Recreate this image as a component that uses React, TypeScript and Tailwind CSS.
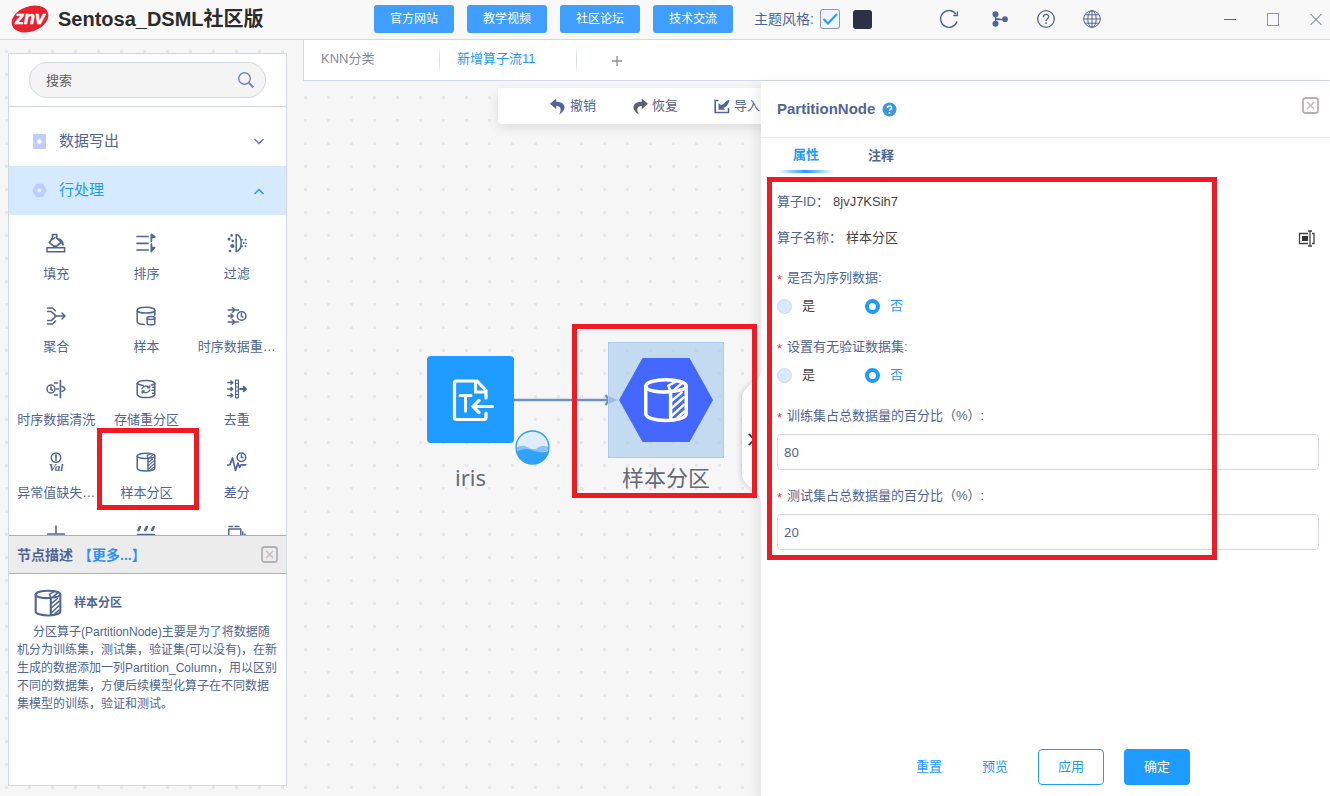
import { useState } from "react";
import type { ReactNode } from "react";
import clsx from "clsx";

const FONT = "font-['Liberation_Sans','Noto_Sans_CJK_SC',sans-serif]";

interface IconProps {
  className?: string;
}

function Icon({ className, children }: IconProps & { children: ReactNode }) {
  return (
    <svg
      viewBox="0 0 20 20"
      fill="none"
      stroke="currentColor"
      strokeWidth={1.5}
      strokeLinecap="round"
      strokeLinejoin="round"
      aria-hidden="true"
      className={clsx("shrink-0", className ?? "h-5 w-5")}
    >
      {children}
    </svg>
  );
}

/* ---------- operator icons ---------- */

function FillIcon() {
  return (
    <Icon>
      <path d="M1 14.8h17.6v4H1z" strokeLinejoin="miter" />
      <path d="M6.500 5V1.500h4.200V5M6.500 5 3.400 9.600l4.200 3.600h3l4.600-4L10.700 5" strokeWidth={1.700} />
      <path d="M13 6.500c2.600.8 3.600 2.400 3.800 5" strokeWidth={2.200} />
      <path d="m6.500 6.500 2.500-2" />
    </Icon>
  );
}

function SortIcon() {
  return (
    <Icon>
      <path d="M1 3.500h11M1 10.300h11M1 17h11" strokeWidth={1.700} />
      <path d="M15.400 8V1.400l3.400 2.600h-3.400M15.400 11.200v7.400M15.400 14.600h3.200l-3.200 3.600" strokeWidth={1.800} />
    </Icon>
  );
}

function FilterIcon() {
  return (
    <Icon>
      <path d="M9.200 1.400v17.200c3.200-.6 5-3 5-8.600s-1.800-8-5-8.600z" />
      <g fill="currentColor" stroke="none">
        <circle cx="2" cy="6" r="1.500" />
        <circle cx="4.600" cy="2.400" r="1.300" />
        <circle cx="5.800" cy="8" r="1.200" />
        <circle cx="5.400" cy="13" r="2.100" />
        <circle cx="3" cy="18" r="1.300" />
        <circle cx="15" cy="6.800" r="1" />
        <circle cx="18.600" cy="6.800" r="1" />
        <circle cx="16.800" cy="10" r="1" />
        <circle cx="19.200" cy="10.200" r=".8" />
        <circle cx="15" cy="13.200" r="1" />
        <circle cx="18.600" cy="13.200" r="1" />
      </g>
    </Icon>
  );
}

function AggregateIcon() {
  return (
    <Icon>
      <path d="M1.500 2h5l3 2.800M1.500 5.600h3.800l4.900 4.400-4.900 4.600H1.500M1.500 18h5l3-2.900" />
      <path d="M8.500 10H19M16 7l3 3-3 3" />
    </Icon>
  );
}

function SampleIcon() {
  return (
    <Icon>
      <ellipse cx="10" cy="4.200" rx="8.800" ry="2.900" />
      <path d="M1.200 4.200v11.400c0 1.600 2.800 2.800 7 3M18.800 4.200v5" />
      <ellipse cx="15" cy="12" rx="3.800" ry="1.500" />
      <path d="M11.200 12v5.400c0 .8 1.600 1.400 3.800 1.400s3.800-.6 3.800-1.400V12" />
    </Icon>
  );
}

function ResampleIcon() {
  return (
    <Icon>
      <path d="M1.200 4h6.600M5.400 1.800 8 4 5.400 6.200M1.200 10h5M4 8l2.200 2L4 12M1.200 16h10M5.400 13.800 8 16l-2.600 2.200M8 4h3.500" />
      <circle cx="14.600" cy="10" r="4.300" />
      <path d="M14.400 7.800v2.600l1.400.8" />
    </Icon>
  );
}

function CleanIcon() {
  return (
    <Icon>
      <circle cx="5" cy="10" r="4" />
      <path d="M5 8v2.200l1.200.8M14.400 1.500v17" strokeWidth={1.700} />
      <path d="M8.500 4h3M10.500 10h2M8.500 16h3M16 7.600c1.800.4 2.600 1.400 3 2.400-.4 1-1.200 2-3 2.400" />
    </Icon>
  );
}

function RepartitionIcon() {
  return (
    <Icon>
      <path d="M1.200 4.400C3 .6 17 .6 18.800 4.400v11.200C17 19.600 3 19.600 1.200 15.600z" />
      <path d="M1.200 4.400c2 1.800 4 2 6 2.200M18.800 4.400c-1 1-2 1.400-3.400 1.700" />
      <path d="M6 9.600c.8-2.800 5.300-3.600 7.200-1M13.600 11c-.8 2.800-5.200 3.600-7.200 1M13.600 6.800v2h-2M6.200 14v-2.200h2" strokeWidth={1.300} />
      <path d="M16.600 8.200h1.400M16 11.200h2M16.600 14.200H18" />
    </Icon>
  );
}

function DedupeIcon() {
  return (
    <Icon>
      <path d="M.8 3.600h5M4 2l1.800 1.600L4 5.200M.8 10h5M4 8.400 5.800 10 4 11.600M.8 16.400h5M4 14.800l1.800 1.600L4 18" />
      <path d="M8.600 1.200h2.800v17.600H8.600zM8.600 4.500h2.800M8.600 8h2.800M8.600 12h2.800M8.600 15.500h2.800" strokeWidth={1.200} />
      <path d="M13 10h5.800M16.600 7.800 19 10l-2.400 2.200" strokeWidth={1.900} />
    </Icon>
  );
}

function MissingIcon() {
  return (
    <Icon>
      <circle cx="10" cy="5.600" r="4.700" />
      <path d="M10 3.200v3M10 7.900v.2" strokeWidth={1.700} />
      <text
        x="10"
        y="19"
        textAnchor="middle"
        fontFamily="Liberation Serif"
        fontStyle="italic"
        fontWeight="bold"
        fontSize="11"
        fill="currentColor"
        stroke="none"
      >
        Val
      </text>
    </Icon>
  );
}

function PartitionIcon({ className }: IconProps) {
  return (
    <Icon className={className}>
      <path d="M12 6.300C6.500 7 1.200 5.800 1.200 4c0-1.700 4-2.800 8.800-2.800s8.800 1.100 8.800 2.800c0 1.200-2.800 2-6.800 2.300z" />
      <path d="M1.200 4v12c0 1.700 4 2.900 8.800 2.900s8.800-1.200 8.800-2.900V4M12 6.300v12.400" />
      <path d="m11 3.800 3-1.700M11 3.800l1 2.400M13.800 5.400l2.800-2.400M12.600 10.200l4.200-3.400M12.600 13.400l5.200-4.600M12.600 16.800l5.200-4.800M15 17.600l3-2.600" strokeWidth={1.100} />
    </Icon>
  );
}

function DiffIcon() {
  return (
    <Icon>
      <path d="m.8 13 2.200-.4L5.500 6l3 12.400L11 11l1.600 4.400 1.600-2.600h4.600" strokeWidth={1.700} />
      <circle cx="14.400" cy="5.200" r="4.300" />
      <path d="M14.400 3v2.600h1.400" />
    </Icon>
  );
}

function MergeIcon() {
  return (
    <Icon>
      <path d="M10 1v7M1.500 9h17M1.500 12h17" />
    </Icon>
  );
}

function StripeIcon() {
  return (
    <Icon>
      <path d="M2.500 5 4 2M9.300 5l1.500-3M16.200 5l1.500-3" strokeWidth={2.600} />
      <path d="M1.500 9.500h17" />
    </Icon>
  );
}

function CopyRowsIcon() {
  return (
    <Icon>
      <path d="M2 1.500h3.500M8 1.500h4M1.800 4h12v12h-12zM15.800 7v12M18 9v10" />
    </Icon>
  );
}

/* ---------- chrome icons ---------- */

function CloseBoxIcon() {
  return (
    <svg viewBox="0 0 17 17" className="h-[17px] w-[17px]" fill="none" aria-hidden="true">
      <rect x="1" y="1" width="15" height="15" rx="2.500" stroke="#b3b1b1" strokeWidth="1.800" />
      <path d="m5.200 5 6.800 7M12 5l-6.800 7" stroke="#cdbcbc" strokeWidth="1.500" />
    </svg>
  );
}

function UndoIcon({ className }: IconProps) {
  return (
    <svg viewBox="0 0 16 17" className={clsx("h-[17px] w-4 shrink-0", className)} aria-hidden="true">
      <path
        d="M6.300.5 0 5.800l6.300 5.400V8c4.500 0 5.700 3.600 2.800 8.500C16.600 12.500 17 4 6.300 3.800z"
        fill="currentColor"
      />
    </svg>
  );
}

function ImportIcon() {
  return (
    <svg viewBox="0 0 16 16" className="h-4 w-4 shrink-0" aria-hidden="true">
      <path d="M4.500 2.500H1.200v12h13.300V10" fill="none" stroke="currentColor" strokeWidth="1.600" />
      <path d="M4.500 5v6.800h7L9.400 9.900C12.800 8.600 14.800 6 15.400 2c-3.400 0-3.400 3-8.400 5.300z" fill="currentColor" />
    </svg>
  );
}

function Logo() {
  return (
    <svg viewBox="0 0 38 30" className="h-[30px] w-[38px] shrink-0" role="img" aria-label="znv">
      <ellipse cx="19" cy="15" rx="19" ry="12.500" fill="#e8222c" transform="rotate(-20 19 15)" />
      <text
        x="19"
        y="20"
        textAnchor="middle"
        fontFamily="Liberation Sans"
        fontStyle="italic"
        fontWeight="bold"
        fontSize="18"
        fill="#fff"
        stroke="#fff"
        strokeWidth=".5"
      >
        znv
      </text>
    </svg>
  );
}

/* ---------- header ---------- */

const LINKS = ["官方网站", "教学视频", "社区论坛", "技术交流"];

function Header() {
  const [light, setLight] = useState(true);

  return (
    <header className="flex h-10 shrink-0 items-start border-b border-[#d3d8e6] bg-[#f8f8f8] pl-[11px]">
      <div className="mt-1 flex w-[363px] shrink-0 items-center gap-[9px]">
        <Logo />
        <h1 className="text-xl leading-7 font-bold whitespace-nowrap text-[#2c2c2c]">
          Sentosa_DSML社区版
        </h1>
      </div>
      <nav className="mt-[5px] flex gap-[13px]">
        {LINKS.map((link) => (
          <a
            key={link}
            href="#"
            className="flex h-7 w-20 items-center justify-center rounded-[3px] bg-[#409eff] text-xs text-white"
          >
            {link}
          </a>
        ))}
      </nav>
      <div className="ml-[21px] flex h-[38px] items-center">
        <label htmlFor="theme-light" className="text-sm whitespace-nowrap text-[#506696]">
          主题风格:
        </label>
        <span className="relative ml-1.5 h-5 w-5">
          <input
            id="theme-light"
            type="checkbox"
            checked={light}
            onChange={(e) => setLight(e.target.checked)}
            className="block h-5 w-5 appearance-none rounded-[3px] border border-[#8c95b3] bg-[#eff4fe]"
          />
          {light && (
            <svg viewBox="0 0 20 20" className="pointer-events-none absolute inset-0" fill="none" aria-hidden="true">
              <path d="m3.500 10 4.500 4.500L17 5" stroke="#1e9bff" strokeWidth="2" />
            </svg>
          )}
        </span>
        <button
          type="button"
          aria-label="深色"
          onClick={() => setLight(false)}
          className="ml-[13px] h-[19px] w-[19px] rounded-[3px] bg-[#2b3245]"
        />
      </div>
      <div className="ml-auto flex h-[38px] items-center text-[#506696]">
        <button type="button" aria-label="刷新" className="mr-8">
          <svg viewBox="0 0 20 20" className="h-5 w-5" fill="none" stroke="currentColor" strokeWidth="1.400">
            <path d="M18 12.500A8.400 8.400 0 1 1 16.800 5M18.400 2.500v4h-4.200" />
          </svg>
        </button>
        <button type="button" aria-label="分支" className="mr-[27px]">
          <svg viewBox="0 0 18 18" className="h-[18px] w-[18px]" fill="currentColor">
            <path d="M4.500 4v10M5 9.500h9" stroke="currentColor" strokeWidth="1.400" />
            <path d="m4.500 8 5.500 1.500" stroke="currentColor" strokeWidth="1" />
            <circle cx="4.500" cy="4.200" r="3" />
            <circle cx="4.500" cy="13.800" r="3" />
            <circle cx="14" cy="9.200" r="2.900" />
          </svg>
        </button>
        <button type="button" aria-label="帮助" className="mr-[26px]">
          <svg viewBox="0 0 20 20" className="h-5 w-5" fill="none" stroke="currentColor" strokeWidth="1.300">
            <circle cx="10" cy="10" r="8.300" />
            <path d="M7.300 8.200c0-3.800 5.600-3.600 5.400-.4-.1 1.900-2.600 2-2.700 4.200" strokeWidth="1.400" />
            <path d="M10 13.400v1.600" strokeWidth="1.600" />
          </svg>
        </button>
        <button type="button" aria-label="语言" className="mr-[121px]">
          <svg viewBox="0 0 20 20" className="h-5 w-5" fill="none" stroke="currentColor" strokeWidth="1">
            <circle cx="10" cy="10" r="8.300" />
            <ellipse cx="10" cy="10" rx="4.200" ry="8.300" />
            <path d="M10 1.700v16.600M1.700 10h16.600M3 5.800h14M3 14.200h14" />
          </svg>
        </button>
        <button type="button" aria-label="最小化" className="mr-[29px]">
          <svg viewBox="0 0 14 14" className="h-3.5 w-3.5" stroke="currentColor">
            <path d="M1 7.500h12" />
          </svg>
        </button>
        <button type="button" aria-label="最大化" className="mr-[29px]">
          <svg viewBox="0 0 14 14" className="h-3.5 w-3.5" stroke="#9a8fb8" fill="none">
            <path d="M1.500 1.500h11v12h-11z" />
          </svg>
        </button>
        <button type="button" aria-label="关闭" className="mr-[7px]">
          <svg viewBox="0 0 14 14" className="h-3.5 w-3.5" stroke="currentColor" fill="none">
            <path d="m1.500 2 11 11M12.500 2l-11 11" />
          </svg>
        </button>
      </div>
    </header>
  );
}

/* ---------- sidebar ---------- */

interface Operator {
  name: string;
  icon: ReactNode;
  marked?: boolean;
}

const OPERATORS: Operator[] = [
  { name: "填充", icon: <FillIcon /> },
  { name: "排序", icon: <SortIcon /> },
  { name: "过滤", icon: <FilterIcon /> },
  { name: "聚合", icon: <AggregateIcon /> },
  { name: "样本", icon: <SampleIcon /> },
  { name: "时序数据重…", icon: <ResampleIcon /> },
  { name: "时序数据清洗", icon: <CleanIcon /> },
  { name: "存储重分区", icon: <RepartitionIcon /> },
  { name: "去重", icon: <DedupeIcon /> },
  { name: "异常值缺失…", icon: <MissingIcon /> },
  { name: "样本分区", icon: <PartitionIcon />, marked: true },
  { name: "差分", icon: <DiffIcon /> },
];

const MORE_OPERATORS: Operator[] = [
  { name: "合并", icon: <MergeIcon /> },
  { name: "分层", icon: <StripeIcon /> },
  { name: "复制", icon: <CopyRowsIcon /> },
];

function Sidebar() {
  return (
    <aside className="mt-[13px] mb-2.5 ml-2 flex w-[279px] shrink-0 flex-col border border-[#d3d8e6] bg-white text-[#506696]">
      <div className="shrink-0 border-b border-[#d3d8e6] px-5 py-2">
        <div className="relative">
          <input
            type="text"
            aria-label="搜索"
            placeholder="搜索"
            className="block h-9 w-full rounded-full border border-[#d3d8e6] bg-[#f4f4f4] pr-10 pl-4 text-[13px] text-[#555] outline-none placeholder:text-[#5c5c5c]"
          />
          <svg
            viewBox="0 0 16 16"
            className="pointer-events-none absolute top-2.5 right-3 h-4 w-4"
            fill="none"
            stroke="#6f85bb"
            aria-hidden="true"
          >
            <circle cx="6.500" cy="6.500" r="5.800" strokeWidth="1.400" />
            <path d="m10.800 10.800 4.600 4.600" strokeWidth="2" />
          </svg>
        </div>
      </div>

      <div className="min-h-0 flex-1 overflow-hidden pt-2.5">
        <button type="button" className="flex h-[49px] w-full items-center pr-[21px] pl-[23px] text-[15px]">
          <svg viewBox="0 0 15 15" className="h-[15px] w-[15px]" aria-hidden="true">
            <rect x="1" width="13" height="15" rx="1" fill="#bfcdfd" />
            <circle cx="7.500" cy="7.500" r="2.200" fill="#fff" />
          </svg>
          <span className="ml-3">数据写出</span>
          <svg viewBox="0 0 12 12" className="ml-auto h-3 w-3" fill="none" stroke="#5d76ad" strokeWidth="1.300" aria-hidden="true">
            <path d="M1.500 3 6 7.500 10.500 3" />
          </svg>
        </button>
        <button
          type="button"
          className="flex h-[49px] w-full items-center bg-[#d6eaff] pr-[21px] pl-[23px] text-[15px] text-[#1e9bff]"
        >
          <svg viewBox="0 0 15 15" className="h-[15px] w-[15px]" aria-hidden="true">
            <path d="M4 .8h7l3.800 6.700-3.800 6.700H4L.2 7.500z" fill="#bfcdfd" />
            <circle cx="7.500" cy="7.500" r="2" fill="#e4eeff" />
          </svg>
          <span className="ml-3">行处理</span>
          <svg viewBox="0 0 12 12" className="ml-auto h-3 w-3" fill="none" stroke="currentColor" strokeWidth="1.500" aria-hidden="true">
            <path d="M1.500 9 6 4.500 10.500 9" />
          </svg>
        </button>

        <div className="grid grid-cols-3 pr-1 pl-0.5">
          {OPERATORS.map((op) => (
            <button
              key={op.name}
              type="button"
              className="relative flex h-[73px] flex-col items-center gap-[13px] pt-[18px] text-[13px] leading-4 whitespace-nowrap"
            >
              {op.icon}
              <span>{op.name}</span>
              {op.marked && (
                <span className="absolute -top-1.5 -right-[7px] -bottom-[3px] -left-1 border-[5px] border-[#ed1c24]" />
              )}
            </button>
          ))}
          {MORE_OPERATORS.map((op) => (
            <button
              key={op.name}
              type="button"
              aria-label={op.name}
              className="flex h-[73px] flex-col items-center pt-[18px]"
            >
              {op.icon}
            </button>
          ))}
        </div>
      </div>

      <section className="h-[250px] shrink-0">
        <div className="flex h-[39px] items-center border-y border-[#aeb0b5] bg-[#ececec] px-2 text-sm font-bold">
          <h2 className="leading-5">节点描述</h2>
          <a href="#" className="ml-[5px] leading-5 text-[#3190f5]">
            【更多...】
          </a>
          <button type="button" aria-label="关闭描述" className="ml-auto">
            <CloseBoxIcon />
          </button>
        </div>
        <div className="px-2 pt-[15px]">
          <div className="flex items-center gap-3 pl-[17px]">
            <PartitionIcon className="h-7 w-7" />
            <h3 className="text-xs font-bold">样本分区</h3>
          </div>
          <p className="mt-1.5 indent-4 text-xs leading-[18px]">
            分区算子(PartitionNode)主要是为了将数据随机分为训练集，测试集，验证集(可以没有)，在新生成的数据添加一列Partition_Column，用以区别不同的数据集，方便后续模型化算子在不同数据集模型的训练，验证和测试。
          </p>
        </div>
      </section>
    </aside>
  );
}

/* ---------- canvas ---------- */

function TabBar() {
  return (
    <div className="flex h-[41px] shrink-0 items-center border-b border-l border-[#d3d8e6] bg-white text-[13px]">
      <button type="button" className="h-full w-[135px] pb-0.5 pl-[17px] text-left text-[#868a9c]">
        KNN分类
      </button>
      <span className="h-7 w-px bg-linear-to-b from-transparent via-[#d3d8e6] to-transparent" />
      <button type="button" className="h-full w-[136px] pb-0.5 pl-[17px] text-left text-[#1e9bff]">
        新增算子流11
      </button>
      <span className="h-7 w-px bg-linear-to-b from-transparent via-[#d3d8e6] to-transparent" />
      <button type="button" aria-label="新增" className="flex h-full w-20 items-center justify-center pt-0.5">
        <svg viewBox="0 0 12 12" className="h-3 w-3" stroke="#8a8f9f" strokeWidth="1.300" aria-hidden="true">
          <path d="M6 1v10M1 6h10" />
        </svg>
      </button>
    </div>
  );
}

function Toolbar() {
  return (
    <div className="absolute top-[7px] left-[195px] flex h-9 w-[600px] items-center gap-9 rounded bg-white pl-[52px] text-[13px] whitespace-nowrap text-[#506696] shadow-[0_4px_12px_rgba(0,0,0,0.1)]">
      <button type="button" className="flex items-center gap-1">
        <UndoIcon />
        撤销
      </button>
      <button type="button" className="flex items-center gap-1 text-[#5e6073]">
        <UndoIcon className="-scale-x-100" />
        恢复
      </button>
      <button type="button" className="flex items-center gap-1">
        <ImportIcon />
        导入
      </button>
    </div>
  );
}

function Canvas() {
  return (
    <main className="relative min-w-0 flex-1 overflow-hidden">
      <Toolbar />

      {/* edge */}
      <svg viewBox="0 0 106 12" className="absolute top-[313px] left-[211px] h-3 w-[106px]" fill="none" aria-hidden="true">
        <path d="M0 6h97" stroke="#6f92bd" strokeWidth="2.500" />
        <path d="m91.500 1 3.500 5-3.500 5" stroke="#6f92bd" strokeWidth="2.200" />
        <path d="m94 2 10 4-10 4z" fill="#8fb2dc" />
      </svg>

      <div className="absolute top-[275px] left-[124px] flex w-[87px] flex-col items-center">
        <div className="flex h-[87px] w-full items-center justify-center rounded bg-[#1e9bff]">
          <svg
            viewBox="0 0 42 42"
            className="h-[42px] w-[42px] overflow-visible"
            fill="none"
            stroke="#fff"
            strokeWidth="3.200"
            strokeLinecap="round"
            aria-hidden="true"
          >
            <path d="M36 34v4.500q0 2-2 2H6.500q-2 0-2-2V4q0-2 2-2H27l9 9.500V19" />
            <path d="M25.500 3v10H35" strokeWidth="2.800" />
            <path d="M10 16.500h11M15.500 17v15" strokeWidth="3" />
            <path d="M24 27.500h18.500M29 21.500l-6 6 6 6" strokeLinejoin="round" />
          </svg>
        </div>
        <span className="mt-5 font-['Noto_Sans',sans-serif] text-[22px] leading-7 text-[#666a78]">
          iris
        </span>
        <svg viewBox="0 0 35 35" className="absolute top-[74px] left-[88px] h-[35px] w-[35px]" aria-hidden="true">
          <circle cx="17.500" cy="17.500" r="16.300" fill="#deedf9" />
          <path d="M1.200 17.500c4-2 8-2.500 12 0s8 2 10 0 7-2 10.600-.5V20L17 26 2 22z" fill="#86c3f7" />
          <path d="M2 21.500c6-3 11-3 16-1s10 2.500 15.600.5C32 29 26 33.800 17.500 33.800S3 28.500 2 21.500z" fill="#2fa2fb" />
          <circle cx="17.500" cy="17.500" r="16.500" fill="none" stroke="#2c9ff5" strokeWidth="1.300" />
        </svg>
      </div>

      <div className="absolute top-[261px] left-[305px] flex w-[116px] flex-col items-center">
        <div className="flex h-[116px] w-full items-center justify-center border border-[#aecbf5] bg-[#a2c8ee]/60">
          <div className="grid">
            <svg viewBox="0 0 96 86" className="col-start-1 row-start-1 h-[86px] w-24" aria-hidden="true">
              <path d="M24.500 1h47L95 43 71.500 85h-47L1 43z" fill="#4467ff" />
            </svg>
            <span className="col-start-1 row-start-1 place-self-center text-white">
              <PartitionIcon className="h-[46px] w-[46px]" />
            </span>
          </div>
        </div>
        <span className="mt-[7px] text-[22px] leading-7 whitespace-nowrap text-[#666a78]">样本分区</span>
      </div>

      {/* drawer handle */}
      <button type="button" aria-label="收起" className="absolute top-[292px] right-0 z-20 h-[130px] w-5">
        <svg viewBox="0 0 20 130" className="h-[130px] w-5 overflow-visible" aria-hidden="true">
          <path
            d="M20 0C19 8 1 12 1 26v74c0 16 18 14 19 30"
            fill="#fff"
            className="drop-shadow-[-2px_0_2px_rgba(80,90,140,0.2)]"
          />
          <path d="m8 61 5 5.500-5 5.500" fill="none" stroke="#333" strokeWidth="1.800" />
        </svg>
      </button>

      <div className="pointer-events-none absolute top-[243px] left-[269px] z-20 h-[174px] w-[185px] border-[5px] border-[#ed1c24]" />
    </main>
  );
}

/* ---------- property drawer ---------- */

function FieldLabel({ htmlFor, children }: { htmlFor?: string; children: ReactNode }) {
  const content = (
    <>
      <span className="mr-1 inline-block w-1.5 align-[-2px] text-[#ff2f2f]">*</span>
      {children}
    </>
  );
  const cls = "block h-5 text-[13px] leading-5 whitespace-nowrap";
  return htmlFor ? (
    <label htmlFor={htmlFor} className={cls}>
      {content}
    </label>
  ) : (
    <legend className={cls}>{content}</legend>
  );
}

function RadioField({ name, label }: { name: string; label: string }) {
  const [value, setValue] = useState("否");

  return (
    <fieldset className="pb-[5px]">
      <FieldLabel>{label}:</FieldLabel>
      <div className="mt-2 flex h-5 items-center gap-[50px]">
        {["是", "否"].map((opt) => (
          <label
            key={opt}
            className={clsx(
              "flex items-center gap-2.5 text-[13px] leading-5",
              value === opt ? "text-[#1e9bff]" : "text-[#444]"
            )}
          >
            <input
              type="radio"
              name={name}
              value={opt}
              checked={value === opt}
              onChange={() => setValue(opt)}
              className="h-[15px] w-[15px] appearance-none rounded-full border border-[#cddbec] bg-[#d6eaff] checked:border-4 checked:border-[#1e9bff] checked:bg-white"
            />
            {opt}
          </label>
        ))}
      </div>
    </fieldset>
  );
}

function NumberField({ id, label, initial }: { id: string; label: string; initial: string }) {
  const [value, setValue] = useState(initial);

  return (
    <div>
      <FieldLabel htmlFor={id}>{label}:</FieldLabel>
      <input
        id={id}
        type="text"
        value={value}
        onChange={(e) => setValue(e.target.value)}
        className="mt-2 block h-9 w-full rounded border border-[#d6d9e4] bg-white px-1.5 font-['Noto_Sans',sans-serif] text-[13px] text-[#506696] outline-none focus:border-[#1e9bff]"
      />
    </div>
  );
}

function Drawer() {
  return (
    <aside className="relative z-10 flex w-[569px] shrink-0 flex-col bg-white text-[13px] text-[#506696] shadow-[-4px_4px_12px_rgba(0,0,0,0.08)]">
      <div className="flex h-[57px] shrink-0 items-center border-b border-[#ececec] pr-[11px] pl-4">
        <h2 className="text-[15px] leading-5 font-bold">PartitionNode</h2>
        <button type="button" aria-label="说明" className="ml-[7px]">
          <svg viewBox="0 0 15 15" className="h-[15px] w-[15px]" aria-hidden="true">
            <circle cx="7.500" cy="7.500" r="7" fill="#3a97dd" />
            <path d="M5.400 6c0-2.800 4.300-2.600 4.200-.2C9.500 7.300 7.600 7.300 7.500 9" fill="none" stroke="#fff" strokeWidth="1.600" />
            <path d="M7.500 10v1.700" stroke="#fff" strokeWidth="1.700" />
          </svg>
        </button>
        <button type="button" aria-label="关闭面板" className="mb-2 ml-auto">
          <CloseBoxIcon />
        </button>
      </div>

      <div className="flex h-9 shrink-0 gap-[19px] pl-[17px] font-bold">
        <button type="button" className="flex w-14 flex-col items-center justify-end text-[#1e9bff]">
          <span className="leading-5">属性</span>
          <span className="mt-[5px] mb-px h-[3px] w-full bg-linear-to-r from-transparent via-[#1e9bff] to-transparent" />
        </button>
        <button type="button" className="w-14 pb-px">
          注释
        </button>
      </div>

      <div className="min-h-0 flex-1 pt-2.5 pr-[11px] pl-4">
        <div className="flex h-9 items-center gap-1">
          <span>算子ID：</span>
          <span className="text-[#444]">8jvJ7KSih7</span>
        </div>
        <div className="flex h-9 items-center gap-1">
          <span>算子名称：</span>
          <span className="text-[#444]">样本分区</span>
          <button type="button" aria-label="重命名" className="mr-1 ml-auto">
            <svg viewBox="0 0 17 17" className="h-[17px] w-[17px]" fill="none" stroke="#444" aria-hidden="true">
              <path d="M10 3.500H1.500v10H10M14 3.500h2v10h-2" strokeWidth="1.300" />
              <path d="M4 6h6v5H4z" fill="#333" stroke="none" />
              <path d="M10 1h4M12 1v15M10 16h4" strokeWidth="1.300" />
            </svg>
          </button>
        </div>
        <div className="mt-3 flex flex-col gap-4">
          <RadioField name="sequence" label="是否为序列数据" />
          <RadioField name="validation" label="设置有无验证数据集" />
          <NumberField id="train-ratio" label="训练集占总数据量的百分比（%）" initial="80" />
          <NumberField id="test-ratio" label="测试集占总数据量的百分比（%）" initial="20" />
        </div>
      </div>

      <div className="flex shrink-0 justify-center pr-[5px] pb-[11px] text-[#1e9bff]">
        <button type="button" className="h-9 w-[66px]">
          重置
        </button>
        <button type="button" className="h-9 w-[66px]">
          预览
        </button>
        <button type="button" className="ml-2.5 h-9 w-[66px] rounded border border-[#1e9bff]">
          应用
        </button>
        <button type="button" className="ml-5 h-9 w-[66px] rounded bg-[#1e9bff] text-white">
          确定
        </button>
      </div>

      <div className="pointer-events-none absolute top-24 left-1.5 h-[383px] w-[450px] border-[5px] border-[#ed1c24]" />
    </aside>
  );
}

export default function App() {
  return (
    <div className={clsx("flex h-screen flex-col overflow-hidden bg-[#f6f6f6]", FONT)}>
      <Header />
      <div className="flex min-h-0 flex-1 bg-[radial-gradient(circle,#e6e7ea_1.5px,transparent_2px)] bg-size-[23px_23px] bg-position-[-5px_0px]">
        <Sidebar />
        <div className="ml-4 flex min-w-0 flex-1 flex-col">
          <TabBar />
          <div className="flex min-h-0 flex-1">
            <Canvas />
            <Drawer />
          </div>
        </div>
      </div>
    </div>
  );
}
